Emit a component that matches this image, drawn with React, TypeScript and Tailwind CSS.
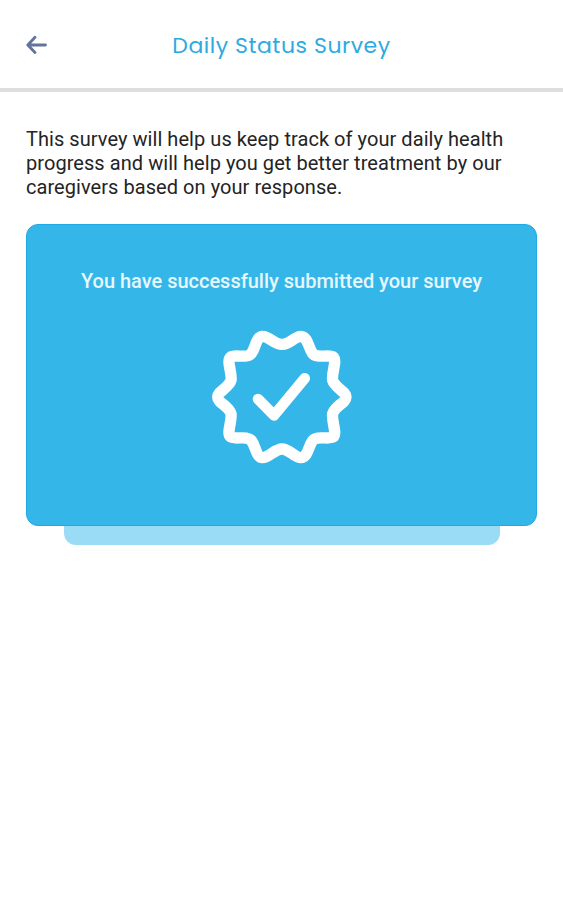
function BackArrow() {
  return (
    <svg className="h-[20px] w-[22px]" viewBox="0 0 22 20" fill="none" stroke="#64739c" strokeWidth="2.8" strokeLinecap="round">
      <path d="M19.5 10H2.5M9 2.2L1.8 10L9 17.5" strokeLinejoin="round" />
    </svg>
  );
}

function VerifiedBadge() {
  return (
    <svg className="h-[150px] w-[160px]" viewBox="0 0 480 450" fill="none" stroke="#fff" strokeLinecap="round" strokeLinejoin="round">
      <path
        strokeWidth="34"
        d="M246 73C268 74 284 49 302 49C324 50 325 83 337 99C351 118 389 101 401 112C411 123 394 161 398 181C404 203 438 214 438 231C438 248 404 259 398 281C394 301 411 339 401 350C389 361 351 344 337 363C325 379 324 412 302 413C284 413 268 387 246 387C224 387 208 413 188 413C168 412 167 379 155 363C141 344 103 361 91 350C79 339 97 301 93 281C87 259 53 248 53 231C53 214 87 203 93 181C97 161 79 123 91 112C103 101 141 118 155 99C167 83 168 50 188 49C208 49 224 74 246 73Z"
      />
      <path strokeWidth="32" d="M174 237L222 286L314 175" />
    </svg>
  );
}

export default function App() {
  return (
    <main className="min-h-[900px] bg-white font-[Roboto,sans-serif]">
      <header className="grid h-[92px] grid-cols-[80px_1fr_80px] items-center border-b-4 border-[#dedede] pl-[26px] pr-[26px] pt-px">
        <BackArrow />
        <h1 className="whitespace-nowrap pt-[2px] text-center font-[Poppins,Lato,sans-serif] text-[22px] leading-[32px] tracking-[0.53px] text-[#2daae0]">
          Daily Status Survey
        </h1>
      </header>
      <section className="px-[26px] pt-[35px]">
        <p className="whitespace-nowrap text-[20px] leading-[24px] tracking-[0.055px] text-[#242424]">
          This survey will help us keep track of your daily health
          <br />
          progress and will help you get better treatment by our
          <br />
          caregivers based on your response.
        </p>
        <div className="mt-[25px] flex h-[302px] flex-col items-center rounded-[12px] border border-[#1eaae2] bg-[#35b6e9] pt-[44px]">
          <p className="whitespace-nowrap text-[20px] font-medium leading-[24px] tracking-[-0.01px] text-[#e6f7fe]">
            You have successfully submitted your survey
          </p>
          <div className="mr-[4px] mt-[27px]">
            <VerifiedBadge />
          </div>
        </div>
        <div className="ml-[38px] h-[19px] w-[436px] rounded-b-[12px] bg-[#9adcf5]" />
      </section>
    </main>
  );
}
